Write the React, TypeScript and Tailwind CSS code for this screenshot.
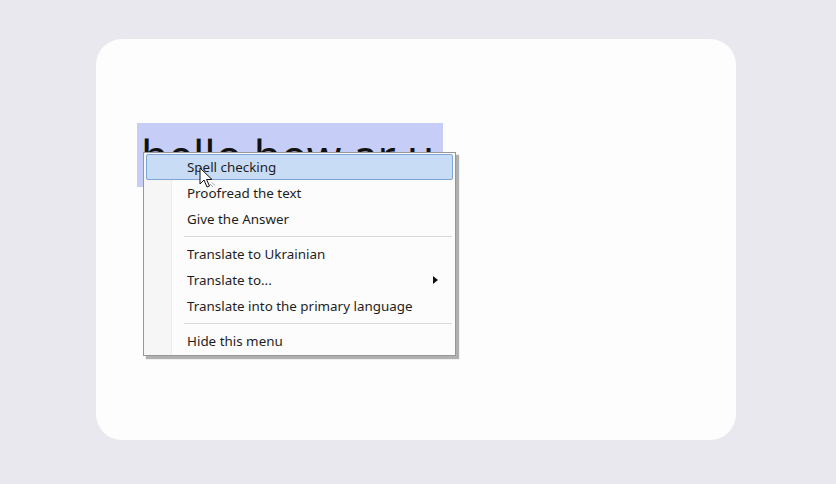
const items: (string | null)[] = [
  'Spell checking',
  'Proofread the text',
  'Give the Answer',
  null,
  'Translate to Ukrainian',
  'Translate to...',
  'Translate into the primary language',
  null,
  'Hide this menu',
]

function Cursor() {
  return (
    <svg
      className="absolute left-[52px] top-[12px]"
      width="18"
      height="24"
      viewBox="0 0 18 24"
    >
      <path
        d="M1 1 L1 17 L5 13 L8 20 L10.5 19 L7.5 12.5 L13 12.5 Z"
        fill="#fff"
        stroke="#111"
        strokeWidth="1"
        strokeLinejoin="round"
      />
      <path d="M11 17 L14 20 M13 15.5 L16 18.5" stroke="#888" strokeWidth="0.8" />
    </svg>
  )
}

function ContextMenu() {
  return (
    <div className="absolute left-[6px] top-[29px] w-[313px] border border-[#979797] bg-[#fcfcfc] shadow-[3px_3px_1px_rgba(0,0,0,0.3)]">
      <div className="relative flex flex-col py-[1px] px-[2px]">
        <div className="absolute left-0 top-0 bottom-0 w-[28px] bg-[#f6f6f6] border-r border-[#ececec]" />
        {items.map((item, i) =>
          item === null ? (
            <div key={i} className="relative ml-[38px] mr-[1px] pt-[4px] pb-[3px]">
              <div className="h-px bg-[#d9d9d9]" />
              <div className="h-px bg-white" />
            </div>
          ) : (
            <div
              key={i}
              className={
                i === 0
                  ? 'relative flex h-[26px] items-center rounded-[2px] border border-[#7fa5d6] bg-[#c9dcf5] pl-[40px] pr-3'
                  : 'relative flex h-[26px] items-center border border-transparent pl-[40px] pr-3'
              }
            >
              <span className="flex-1 text-[13.4px] text-[#1e1e1e]">{item}</span>
              {item === 'Translate to...' && (
                <svg width="5" height="8" viewBox="0 0 5 8" className="mr-[2px]">
                  <path d="M0 0 L5 4 L0 8 Z" fill="#111" />
                </svg>
              )}
              {i === 0 && <Cursor />}
            </div>
          )
        )}
      </div>
    </div>
  )
}

export default function App() {
  return (
    <div
      className="h-[484px] w-[836px] bg-[#e8e8ee] pt-[39px] pl-[96px]"
      style={{ fontFamily: '"Noto Sans", "Open Sans", sans-serif' }}
    >
      <div className="h-[401px] w-[640px] rounded-[26px] bg-[#fdfdfd] pl-[41px] pt-[84px]">
        <div className="relative inline-block">
          <div className="inline-block bg-[#c6cdf6] pl-[4px] pr-[9px] text-[44px] font-normal leading-[64px] text-[#111]">
            hello how ar u
          </div>
          <ContextMenu />
        </div>
      </div>
    </div>
  )
}
